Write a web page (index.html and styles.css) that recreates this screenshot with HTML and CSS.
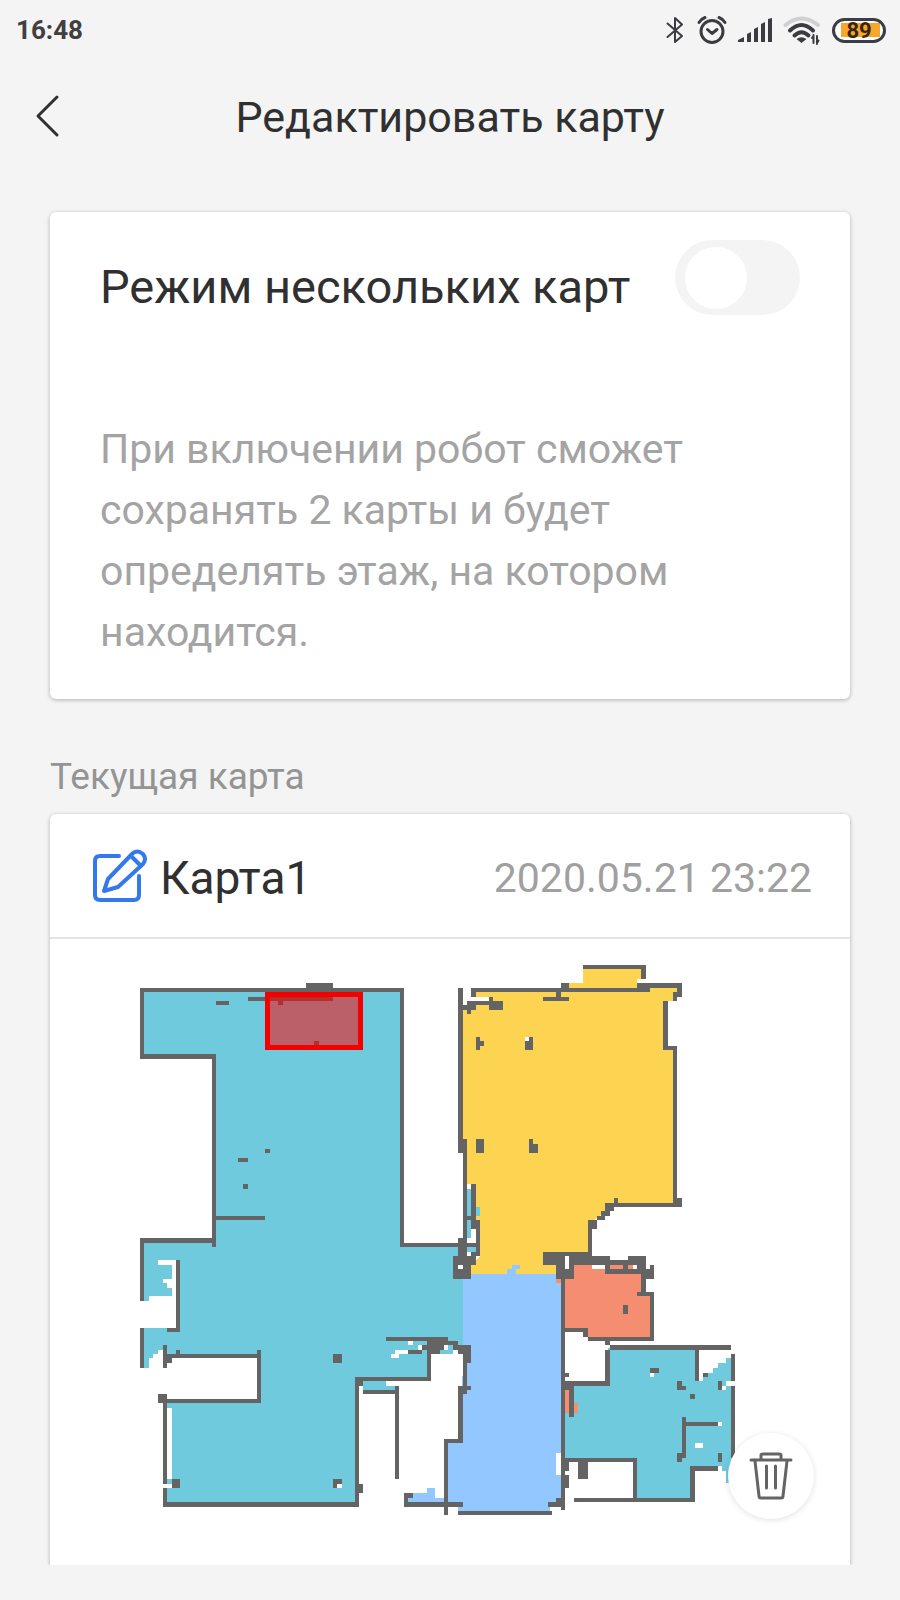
FILE: index.html
```html
<!DOCTYPE html>
<html lang="ru">
<head>
<meta charset="utf-8">
<meta name="viewport" content="width=device-width, initial-scale=1">
<title>Редактировать карту</title>
<link rel="stylesheet" href="styles.css">
</head>
<body>
<div class="status">
  <span class="clock">16:48</span>
  <div class="status-icons">
    <svg width="18" height="28" viewBox="0 0 18 28" class="line thin"><path d="M1.500 7.500 16 20 9 26V2l7 6.500L1.500 21"/></svg>
    <svg width="28" height="28" viewBox="0 0 28 28" class="line"><circle cx="14" cy="15.500" r="11"/><path d="m9.500 13.500 4.500 4 5-4M1 6.500Q3 3 7 1.500M27 6.500Q25 3 21 1.500"/></svg>
    <svg width="34" height="26" viewBox="0 0 34 26" class="solid"><path d="M0 25V23L6 20V25zM9 25V17l4-2v10zM16 25V12l4-2v15zM23 25V7l4-2v20zM30 25V2l4-1V25z"/></svg>
    <svg width="36" height="28" viewBox="0 0 36 28"><path class="wifi-off" d="M1.500 9Q17.500-4 34 9"/><path class="wifi-on" d="M6 14.500Q17.500 3.500 29 14.500M10.500 19.500q7-6.500 14 0"/><path class="solid" d="M12.500 23q5-3.500 10 0l-5 4z"/><path class="arrows" d="M29.500 19v8M28 22l1.500-2M33 20v8M34.500 24.500 33 27"/></svg>
    <span class="battery">89</span>
  </div>
</div>
<header class="header">
  <button class="back" type="button" aria-label="Назад"><svg width="26" height="44" viewBox="0 0 26 44"><path d="M22 3 3 22l19 19"/></svg></button>
  <h1 class="title">Редактировать карту</h1>
</header>
<main class="content">
  <section class="card mode">
    <div class="mode-row">
      <label class="mode-label" for="multi">Режим нескольких карт</label>
      <input class="switch" id="multi" type="checkbox" role="switch">
    </div>
    <p class="mode-text">При включении робот сможет сохранять 2 карты и будет определять этаж, на котором находится.</p>
  </section>
  <h2 class="section-title">Текущая карта</h2>
  <section class="card map-card">
    <div class="map-head">
      <button class="rename" type="button" aria-label="Переименовать"><svg width="54" height="54" viewBox="0 0 54 54"><path d="M26 7H7Q2 7 2 12V46Q2 51 7 51H41Q46 51 46 46V27M11 42 15 30 39 5Q44 0 50 5Q54 10 50 15L25 38ZM38 7 48 17"/></svg></button>
      <h3 class="map-name">Карта1</h3>
      <time class="map-date">2020.05.21 23:22</time>
    </div>
    <div class="map-body">
      <svg class="map" viewBox="50 938 800 626" shape-rendering="crispEdges" role="img" aria-label="План помещения">
        <g class="teal">
          <path d="M142 989H402V1243H463V1344H429V1378H357V1503H165V1400H259V1355H163V1349H158V1353H153V1357H149V1367H142V1239H214V1055H142z"/>
          <path d="M363 1380h32v9h-32z"/>
          <path d="M608 1347H697V1353H733V1457L731 1482H726V1470H722V1467H692V1499H635V1459H563V1383H608z"/>
        </g>
        <path class="yellow" d="M463 1006H476V989H569V982H583V966H643V978H637V984H679V991H673V1000H665V1047H675V1204H614L590 1222V1251L561 1273H471V1264L480 1255V1219H476V1183H465V1138H463z"/>
        <path class="blue" d="M463 1273H563V1503H550V1511H458V1503H446V1440H461V1393L465 1344H463zM507 1268h9v5h-9zM512 1264h8v4h-8zM408 1497h36v5h-36zM413 1492h22v5h-22zM427 1487h8v5h-8z"/>
        <path class="salmon" d="M563 1278 574 1264H646V1293H652V1338H588V1329H563zM556 1278h5v4h-5z"/>
        <path class="white" d="M158 1259h18v5h-18zM172 1259h4v36h-4zM163 1278h9v4h-9zM167 1282h5v5h-5zM149 1295h27v32h-27zM140 1300h9v27h-9zM167 1407h5v71h-5zM386 1380h9v5h-9zM408 1340h5v4h-5zM418 1344h4v5h-4zM395 1349h13v4h-13zM391 1353h8v4h-8zM431 1353h27v23h-27zM463 987h8v17h-8zM471 996h18v4h-18zM556 1452h5v22h-5zM592 1264h13v4h-13zM699 1349H731V1357H726V1362H718V1367H713V1372H708V1376H703V1380H699z"/>
        <path class="grey" d="M140 987h264v4H140zM140 987h4v71h-4zM140 1053h76v5h-76zM212 1053h4v193h-4zM400 987h4v259h-4zM306 982h27v5h-27zM216 1000h13v4h-13zM248 996h85v4h-85zM278 1000h5v4h-5zM314 1040h5v4h-5zM238 1157h10v4h-10zM265 1148h5v4h-5zM243 1183h5v5h-5zM216 1215h49v4h-49z
          M140 1237h76v5h-76zM140 1237h4v63h-4zM140 1327h4v40h-4zM176 1259h4v72h-4zM167 1327h13v4h-13zM163 1344h4v23h-4zM167 1353h94v4h-94zM167 1357h5v5h-5zM176 1349h4v4h-4zM257 1349h4v53h-4zM158 1393h9v9h-9zM163 1398h98v4h-98zM163 1398h4v108h-4zM172 1478h8v9h-8zM333 1478h9v9h-9zM333 1353h9v9h-9zM163 1501h196v5H163zM355 1376h4v130h-4zM359 1380h4v5h-4zM359 1483h4v9h-4z
          M355 1376h76v4h-76zM363 1389h36v4h-36zM395 1385h4v93h-4zM427 1345h4v35h-4zM386 1336h62v4h-62zM427 1340h17v13h-17zM422 1344h5v5h-5zM408 1349h14v4h-14zM444 1340h14v4h-14zM453 1344h18v5h-18zM458 1349h13v4h-13zM463 1353h8v9h-8zM463 1362h4v23h-4zM458 1385h13v4h-13zM458 1389h9v4h-9zM458 1393h5v49h-5zM444 1438h19v4h-19zM444 1438h4v76h-4zM404 1501h59v5h-59zM404 1492h4v14h-4zM404 1492h9v5h-9zM458 1510h94v4h-94zM548 1501h17v5h-17zM556 1497h5v5h-5zM561 1264h4v245h-4z
          M404 1242h54v4h-54zM458 1237h9v18h-9zM453 1255h18v23h-18zM471 1251h9v4h-9zM471 1255h5v9h-5zM463 1138h4v102h-4zM471 1183h5v37h-5zM467 1215h9v4h-9zM471 1219h9v9h-9zM476 1228h4v27h-4zM467 1242h13v4h-13z
          M458 987h5v165h-5zM458 1138h9v14h-9zM471 987h179v4H471zM471 987h5v9h-5zM561 982h8v5h-8zM556 991h5v5h-5zM543 996h26v4h-26zM583 964h63v4h-63zM641 964h5v14h-5zM637 982h45v5h-45zM677 982h5v14h-5zM673 991h4v9h-4zM663 1000h5v49h-5zM663 1045h14v4h-14zM673 1045h4v157h-4zM673 1197h9v9h-9zM614 1202h59v4h-59zM614 1197h4v5h-4zM605 1202h9v8h-9zM601 1210h9v5h-9zM597 1215h8v4h-8zM588 1219h9v9h-9zM588 1219h4v32h-4zM467 1000h26v4h-26zM489 996h4v4h-4zM489 1000h14v9h-14zM463 1004h13v5h-13zM467 1009h4v4h-4zM476 1036h4v13h-4zM480 1040h4v5h-4zM525 1036h8v13h-8zM476 1138h8v14h-8zM529 1138h4v14h-4zM533 1143h5v9h-5z
          M543 1251h49v13h-49zM592 1255h18v9h-18zM556 1264h18v14h-18zM610 1259h18v5h-18zM628 1255h18v9h-18zM605 1264h5v9h-5zM605 1268h41v5h-41zM623 1264h5v4h-5zM637 1264h9v9h-9zM646 1268h8v10h-8zM650 1264h4v4h-4zM641 1273h5v18h-5zM637 1291h17v4h-17zM650 1291h4v49h-4zM588 1336h66v4h-66zM583 1327h5v9h-5zM565 1327h18v4h-18zM623 1304h5v9h-5z
          M610 1344h121v5H610zM605 1340h5v4h-5zM605 1349h5v36h-5zM565 1380h45v5h-45zM565 1372h4v4h-4zM565 1385h9v4h-9zM569 1385h5v31h-5zM565 1457h72v4h-72zM633 1457h4v44h-4zM574 1497h121v4H574zM690 1465h5v36h-5zM690 1465h28v5h-28zM731 1353h4v27h-4zM731 1385h4v72h-4zM718 1380h4v9h-4zM695 1349h4v31h-4zM703 1372h5v4h-5zM650 1367h9v5h-9zM677 1380h5v9h-5zM682 1385h4v4h-4zM690 1393h5v5h-5zM682 1416h4v41h-4zM686 1421h32v4h-32zM677 1452h5v9h-5zM718 1452h4v9h-4zM565 1461h4v9h-4zM565 1474h4v13h-4zM578 1461h10v17h-10z"/>
        <path class="teal" d="M467 1188h4v27h-4zM467 1219h4v18h-4zM476 1206h4v9h-4zM467 1246h9v5h-9zM440 1349h13v4h-13zM448 1344h5v5h-5z"/>
        <path class="salmon" d="M565 1389h4v23h-4zM574 1402h4v10h-4z"/>
        <path class="white" d="M163 1483h9v4h-9zM337 1483h5v4h-5zM458 1264h5v4h-5zM444 1344h4v5h-4zM453 1349h5v4h-5zM471 1228h5v14h-5zM467 1237h4v5h-4zM467 1251h4v4h-4zM525 1036h4v4h-4zM565 1255h4v13h-4zM633 1264h4v4h-4zM718 1465h4v5h-4zM726 1380h9v5h-9zM722 1385h4v4h-4zM650 1372h4v4h-4zM718 1421h4v4h-4zM695 1442h8v5h-8z"/>
        <rect class="zone" x="265" y="991" width="98" height="58"/>
        <path class="zone-edge" d="M265 991h98v58h-98zM270 996v48h88v-48z"/>
      </svg>
      <button class="delete" type="button" aria-label="Удалить"><svg width="42" height="46" viewBox="0 0 42 46"><path d="M1 7H41M11 6V2Q11 1 13 1H29Q31 1 31 2V6M5 8 9 43Q9 45 11 45H31Q33 45 33 43L37 8"/><path d="M16.500 13V35M25.500 13V35" class="bars"/></svg></button>
    </div>
  </section>
</main>
</body>
</html>
```
FILE: styles.css
```css
* { box-sizing: border-box; }
body {
  margin: 0;
  min-height: 100vh;
  background: #f4f4f4;
  color: #303030;
  font-family: Roboto, "Noto Sans", sans-serif;
}
button { border: 0; padding: 0; background: none; display: flex; align-items: center; justify-content: center; }
h1, h2, h3, p { margin: 0; font-weight: 400; }
svg { display: block; fill: none; stroke-linecap: round; stroke-linejoin: round; overflow: visible; }

.status { display: flex; align-items: center; justify-content: space-between; height: 60px; padding: 0 14px 0 16px; }
.clock { font-size: 26px; font-weight: 700; line-height: 32px; color: #404040; }
.status-icons { display: flex; align-items: center; gap: 12px; }
.line { stroke: #3c3c40; stroke-width: 3; }
.thin { stroke-width: 2; margin-right: 2px; }
.solid { fill: #3c3c40; }
.wifi-off { stroke: #d0d0d0; stroke-width: 4; }
.wifi-on { stroke: #3c3c40; stroke-width: 4; }
.arrows { stroke: #3c3c40; stroke-width: 2; }
.battery {
  width: 54px;
  height: 25px;
  border: 3px solid #3c3c48;
  border-radius: 13px;
  background: linear-gradient(#f9a62c, #f9a62c) 6px center / 39px 14px no-repeat #fff;
  font-size: 22px;
  font-weight: 700;
  line-height: 20px;
  text-align: center;
  color: #38260c;
}

.header { display: grid; grid-template-columns: 96px 1fr 96px; align-items: center; height: 152px; padding-bottom: 40px; }
.back { width: 96px; height: 80px; }
.back svg { stroke: #303030; stroke-width: 3; }
.title { padding-top: 2px; font-size: 43px; line-height: 52px; text-align: center; white-space: nowrap; }

.content { padding: 0 50px 36px; }
.card { background: #fff; border-radius: 6px; box-shadow: 0 1px 4px rgba(0, 0, 0, .28); }
.mode { padding: 28px 50px 36px 50px; }
.mode-row { display: flex; justify-content: space-between; align-items: flex-start; margin-bottom: 104px; }
.mode-label { padding-top: 19px; font-size: 47px; line-height: 56px; white-space: nowrap; }
.switch { appearance: none; flex: none; width: 125px; height: 75px; margin: 0; padding: 7px 10px; border-radius: 38px; background: #f4f4f4; }
.switch::before { content: ""; display: block; width: 62px; height: 62px; border-radius: 50%; background: #fff; }
.switch:checked { background: #3478f0; }
.switch:checked::before { margin-left: 43px; }
.mode-text { font-size: 41px; line-height: 61px; color: #a4a4a4; }
.section-title { padding: 55px 0 14px; font-size: 37px; line-height: 46px; color: #949494; }

.map-card { border-radius: 6px 6px 0 0; clip-path: inset(-6px -6px 0); }
.map-head { display: flex; align-items: center; height: 125px; padding: 0 38px 0 43px; border-bottom: 2px solid #e4e4e4; }
.rename { margin-right: 13px; }
.rename svg { stroke: #3478ee; stroke-width: 4; }
.map-name { padding-top: 4px; font-size: 46px; line-height: 56px; }
.map-date { margin-left: auto; padding-top: 4px; font-size: 41px; line-height: 52px; color: #a0a0a0; }
.map-body { position: relative; }
.map { width: 100%; height: auto; }
.teal { fill: #70cade; }
.yellow { fill: #fdd452; }
.blue { fill: #93c7ff; }
.salmon { fill: #f58e70; }
.white { fill: #fff; }
.grey { fill: #646464; }
.zone { fill: rgba(255, 0, 0, .53); }
.zone-edge { fill: #f40000; fill-rule: evenodd; }
.delete { position: absolute; right: 36px; bottom: 46px; width: 86px; height: 86px; border-radius: 50%; background: #fff; box-shadow: 0 1px 6px rgba(0, 0, 0, .12); }
.delete svg { stroke: #646464; stroke-width: 3; }
```
